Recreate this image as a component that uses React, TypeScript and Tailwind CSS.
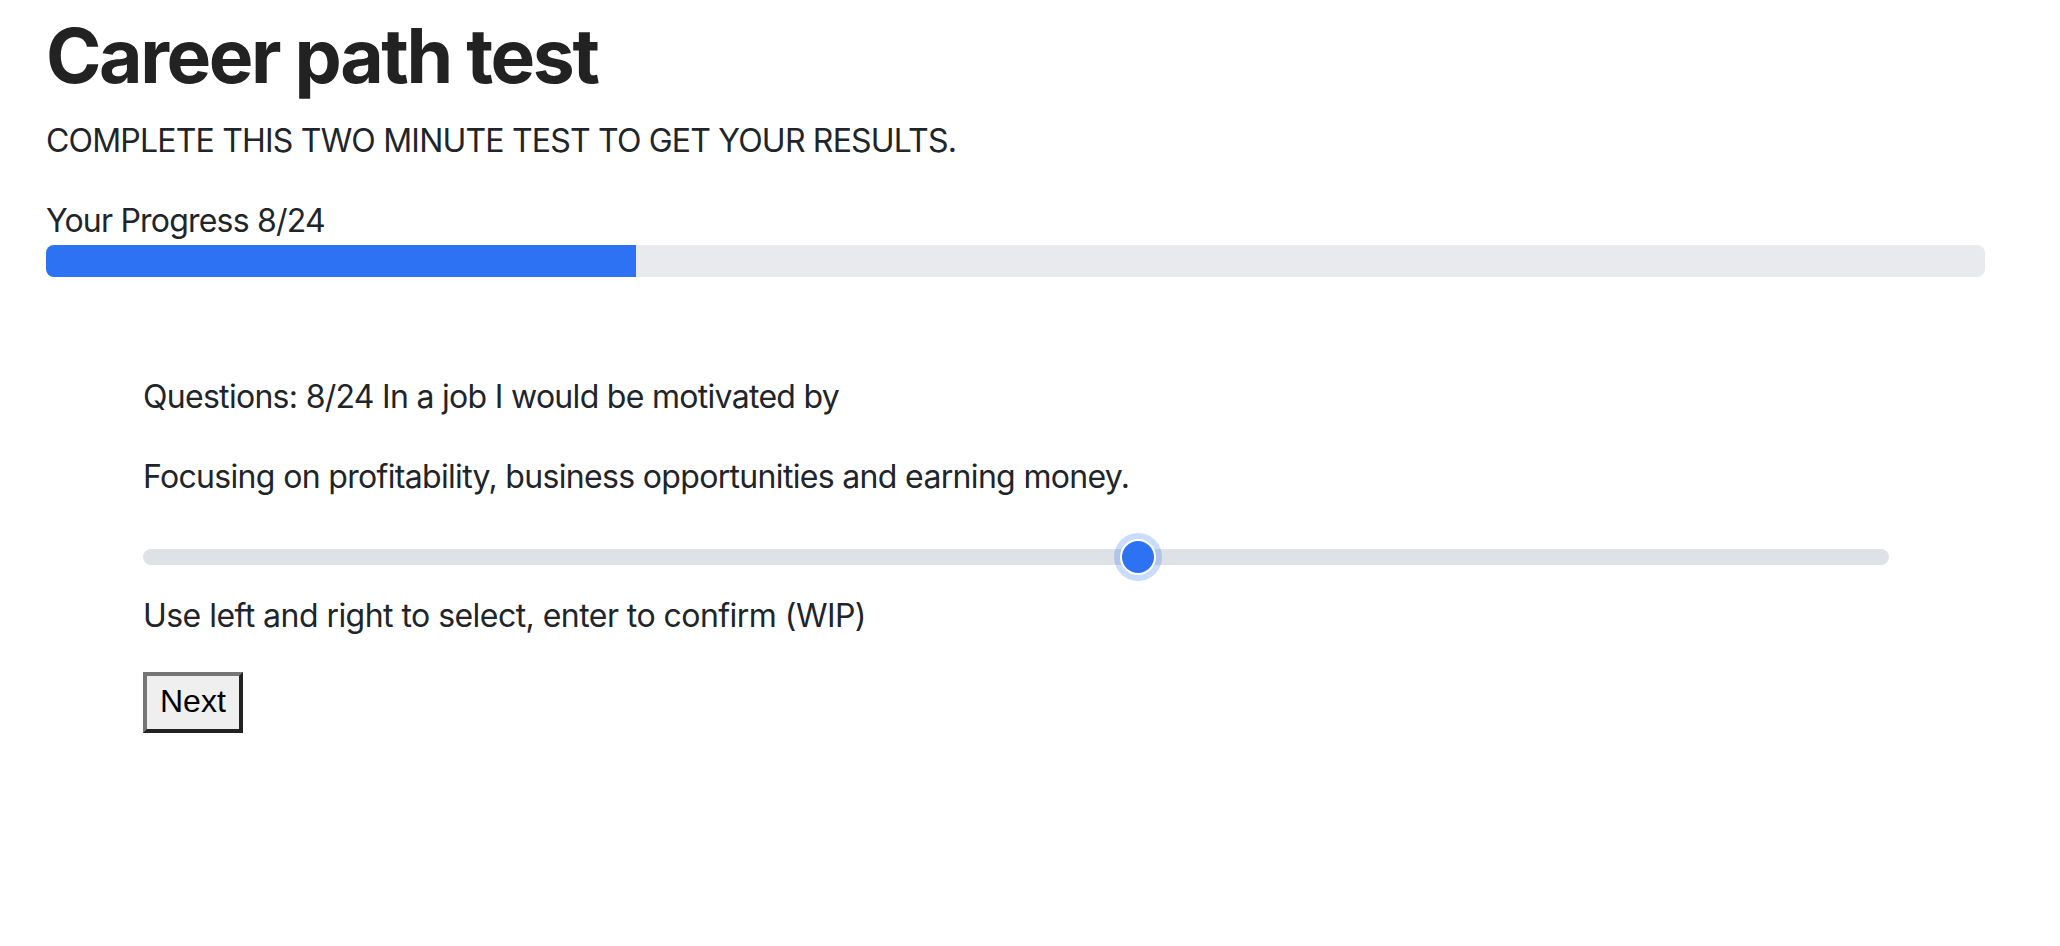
import React from "react";

export default function App() {
  const current = 8;
  const total = 24;
  const progress = ((current - 1) / (total - 1)) * 100;
  const sliderValue = 4;
  const sliderMax = 7;

  return (
    <div
      className="min-h-screen bg-white text-[#212529] pl-[46px] pr-[75px] pt-[11px]"
      style={{ fontFamily: "Inter, 'Noto Sans', sans-serif" }}
    >
      <h1 className="text-[75px] leading-[1.2] font-bold tracking-[-0.032em] text-[#222222] mb-[16px]">
        Career path test
      </h1>
      <p className="text-[32px] leading-[1.5] mb-[32px] tracking-[-0.025em]">
        COMPLETE THIS TWO MINUTE TEST TO GET YOUR RESULTS.
      </p>
      <p className="text-[32px] leading-[1.5] tracking-[-0.025em]">
        Your Progress {current}/{total}
      </p>
      <div className="h-[32px] w-full rounded-[8px] bg-[#e9eaee] overflow-hidden flex">
        <div
          className="h-full bg-[#2d72f2]"
          style={{ width: `${progress}%` }}
        />
      </div>

      <div className="pl-[97px] pr-[96px] pt-[96px]">
        <p className="text-[32px] leading-[1.5] mb-[32px] tracking-[-0.022em]">
          Questions: {current}/{total} In a job I would be motivated by
        </p>
        <p className="text-[32px] leading-[1.5] mb-[32px] tracking-[-0.021em]">
          Focusing on profitability, business opportunities and earning money.
        </p>
        <div className="relative h-[48px] flex items-center">
          <div className="h-[16px] w-full rounded-full bg-[#dee1e6]" />
          <div
            className="absolute top-[8px] h-[32px] w-[32px] rounded-full bg-[#2d72f2] shadow-[0_0_0_2px_#ffffff,0_0_0_8px_rgba(45,114,242,0.25)]"
            style={{
              left: `calc((100% - 32px) * ${sliderValue / sliderMax})`,
            }}
          />
        </div>
        <p className="text-[32px] leading-[1.5] mt-[11px] mb-[32px] tracking-[-0.017em]">
          Use left and right to select, enter to confirm (WIP)
        </p>
        <button
          className="bg-[#efefef] text-black text-[32px] leading-[1.15] px-[13px] pt-[7px] pb-[9px] border-[4px] border-t-[#767676] border-l-[#767676] border-b-[#222222] border-r-[#222222]"
          style={{ fontFamily: "'Liberation Sans', Arial, sans-serif" }}
        >
          Next
        </button>
      </div>
    </div>
  );
}
